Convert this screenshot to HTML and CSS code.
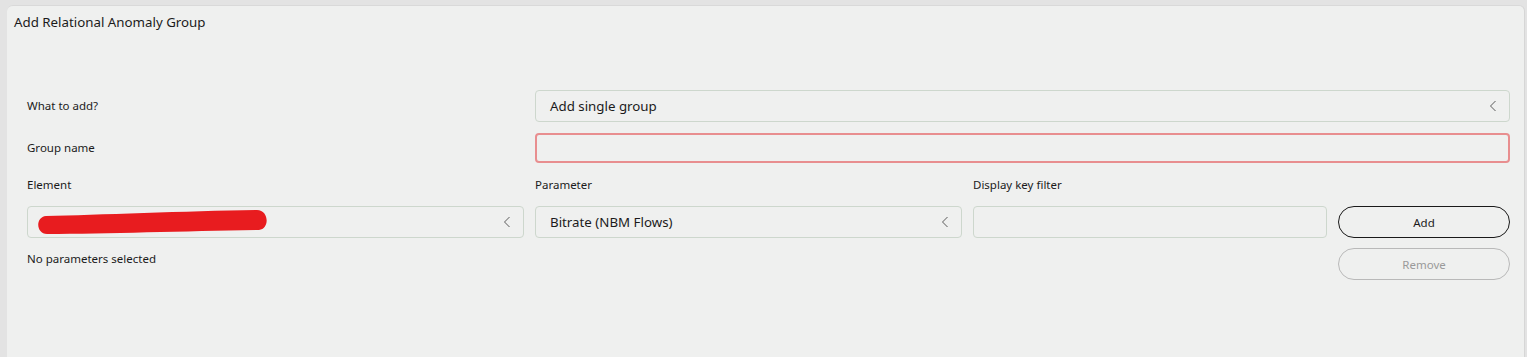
FILE: index.html
```html
<!DOCTYPE html>
<html lang="en">
<head>
  <meta charset="UTF-8" />
  <title>Add Relational Anomaly Group</title>
  <link rel="stylesheet" href="styles.css">
</head>
<body>
  <div class="dialog">
    <h1 class="dialog-title">Add Relational Anomaly Group</h1>

    <div class="form">
      <div class="field-label">What to add?</div>
      <div class="select wide">
        <span class="select-value">Add single group</span>
        <svg class="chevron" width="8" height="12" viewBox="0 0 8 12"><polyline points="6.5,1 1.5,6 6.5,11" /></svg>
      </div>

      <div class="field-label">Group name</div>
      <div class="text-input wide invalid"></div>

      <div class="col-label">Element</div>
      <div class="col-label">Parameter</div>
      <div class="col-label">Display key filter</div>
      <div></div>

      <div class="select">
        <svg class="redact" width="232" height="26" viewBox="0 0 232 26">
          <path d="M9 7 C 60 6, 150 2, 220 1 C 232 1, 233 20, 222 21 C 150 22, 70 25, 10 25 C -1 25, -2 8, 9 7 Z" />
        </svg>
        <svg class="chevron" width="8" height="12" viewBox="0 0 8 12"><polyline points="6.5,1 1.5,6 6.5,11" /></svg>
      </div>
      <div class="select">
        <span class="select-value">Bitrate (NBM Flows)</span>
        <svg class="chevron" width="8" height="12" viewBox="0 0 8 12"><polyline points="6.5,1 1.5,6 6.5,11" /></svg>
      </div>
      <div class="text-input"></div>
      <button class="btn">Add</button>

      <div class="status">No parameters selected</div>
      <div></div>
      <div></div>
      <button class="btn disabled">Remove</button>
    </div>
  </div>
</body>
</html>
```

FILE: styles.css
```css
:root {
  --page-bg: #e3e3e3;
  --card-bg: #eff0ef;
  --text-dark: #1b1b1b;
  --text-muted: #9a9a9a;
  --field-border: #cdd7cd;
  --invalid: #e88e8f;
}

* {
  box-sizing: border-box;
}

body {
  margin: 0;
  background-color: var(--page-bg);
  font-family: 'Noto Sans', 'Open Sans', sans-serif;
  color: var(--text-dark);
}

.dialog {
  margin: 5px 2px 0 7px;
  min-height: 352px;
  background-color: var(--card-bg);
  border-top: 1px solid #d9d9d9;
  border-right: 1px solid #d6d6d6;
  border-radius: 6px 6px 0 0;
  padding: 6px 14px 0 7px;
}

.dialog-title {
  margin: 0;
  font-size: 13.3px;
  font-weight: 400;
  line-height: 20px;
}

.form {
  margin: 58px 0 0 13px;
  display: grid;
  grid-template-columns: 497fr 427fr 354fr 172fr;
  column-gap: 11px;
  row-gap: 11px;
  align-items: center;
}

.field-label {
  font-size: 11.5px;
  margin-top: -2px;
}

.wide {
  grid-column: 2 / 5;
}

.col-label {
  font-size: 11.5px;
  line-height: 21px;
}

.select,
.text-input {
  height: 32px;
  border: 1px solid var(--field-border);
  border-radius: 4px;
  display: flex;
  align-items: center;
  padding: 0 12px 0 14px;
}

.text-input.invalid {
  height: 30px;
  border: 2px solid var(--invalid);
}

.select-value {
  flex: 1;
  font-size: 13.3px;
}

.chevron {
  margin-left: auto;
  fill: none;
  stroke: #5a5a5a;
  stroke-width: 1;
}

.redact {
  margin-left: -5px;
  fill: #e81c1f;
}

.btn {
  height: 32px;
  border: 1px solid #1a1a1a;
  border-radius: 16px;
  background: transparent;
  font-family: inherit;
  font-size: 11.5px;
  color: var(--text-dark);
}

.btn.disabled {
  margin-top: -1px;
  border-color: #b9b9b9;
  color: var(--text-muted);
}

.status {
  font-size: 11.5px;
  align-self: start;
  margin-top: 2px;
}
```
